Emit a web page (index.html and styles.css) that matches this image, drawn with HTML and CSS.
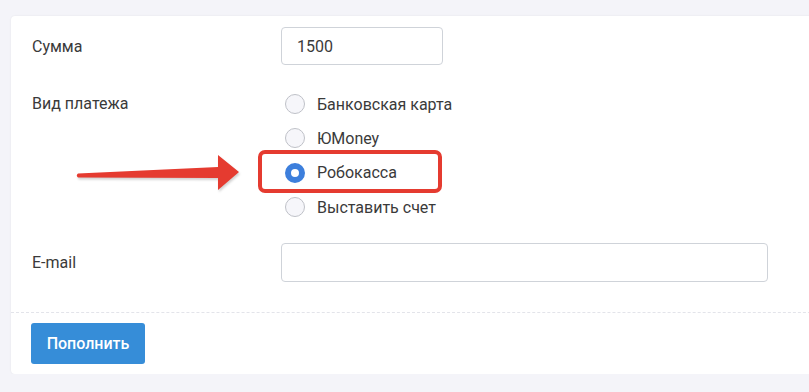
FILE: index.html
```html
<!DOCTYPE html>
<html lang="ru">

<head>
  <meta charset="UTF-8">
  <meta name="viewport" content="width=device-width, initial-scale=1.0">
  <title>Пополнение баланса</title>
  <link rel="stylesheet" href="styles.css">
</head>

<body>
  <div class="card">
    <div class="form">
      <div class="row">
        <label class="label">Сумма</label>
        <input class="input input-sum" type="text" value="1500">
      </div>
      <div class="row row-pay">
        <span class="label">Вид платежа</span>
        <ul class="radios">
          <li><span class="radio"></span>Банковская карта</li>
          <li><span class="radio"></span>ЮMoney</li>
          <li><span class="radio checked"></span>Робокасса</li>
          <li><span class="radio"></span>Выставить счет</li>
        </ul>
      </div>
      <div class="row row-mail">
        <label class="label">E-mail</label>
        <input class="input input-mail" type="text">
      </div>
    </div>
    <div class="footer">
      <span class="btn">Пополнить</span>
    </div>

    <!-- пометки поверх формы -->
    <div class="mark"></div>
    <svg class="arrow" width="180" height="50" viewBox="0 0 180 50">
      <path d="M8 26.5 L148 20 L148 8 L169 25 L148 43 L148 31 L8 30.5 Q5.5 28.5 8 26.5 Z" fill="#e53b30" />
    </svg>
  </div>
</body>

</html>
```

FILE: styles.css
```css
* {
  margin: 0;
  padding: 0;
  box-sizing: border-box;
}

ul {
  list-style: none;
}

body {
  background-color: #f4f4f9;
  padding: 16px 0 0 11px;
  overflow: hidden;
  font-family: Roboto, "Liberation Sans", sans-serif;
  font-size: 16px;
  color: #3a3a3a;
}

.card {
  position: relative;
  width: 830px;
  background-color: #fff;
  border-radius: 4px;
  box-shadow: 0 0 2px rgba(0, 0, 0, .08);
}

.form {
  padding: 11px 21px 30px;
}

.row {
  display: flex;
  align-items: center;
}

.label {
  width: 249px;
  flex-shrink: 0;
}

.input {
  height: 38px;
  padding: 0 15px;
  font-family: inherit;
  font-size: 16px;
  color: #3a3a3a;
  border: 1px solid #cfd3d9;
  border-radius: 4px;
  outline: none;
}

.input-sum {
  width: 162px;
}

.row-pay {
  align-items: flex-start;
  margin-top: 22px;
}

.row-pay .label {
  line-height: 34px;
}

.radios li {
  display: flex;
  align-items: center;
  height: 34.3px;
  padding-left: 4px;
}

.radio {
  width: 20px;
  height: 20px;
  margin-right: 12px;
  border: 1px solid #bfc1c8;
  border-radius: 50%;
  background-color: #f6f6fa;
}

.radio.checked {
  border: 6px solid #3d7fdc;
  background-color: #fff;
}

.row-mail {
  margin-top: 19px;
}

.input-mail {
  width: 487px;
  height: 39px;
}

.footer {
  padding: 10px 20px 10px;
  border-top: 1px dashed #e3e4ea;
}

.btn {
  display: inline-block;
  width: 114px;
  height: 41px;
  line-height: 41px;
  text-align: center;
  font-size: 16px;
  font-weight: 500;
  color: #fff;
  background-color: #368dd8;
  border-radius: 3px;
}

.mark {
  position: absolute;
  left: 247px;
  top: 134px;
  width: 184px;
  height: 43px;
  border: 4px solid #e53b30;
  border-radius: 7px;
}

.arrow {
  position: absolute;
  left: 59px;
  top: 131px;
  filter: drop-shadow(1px 2px 1px rgba(0, 0, 0, .18));
}
```
